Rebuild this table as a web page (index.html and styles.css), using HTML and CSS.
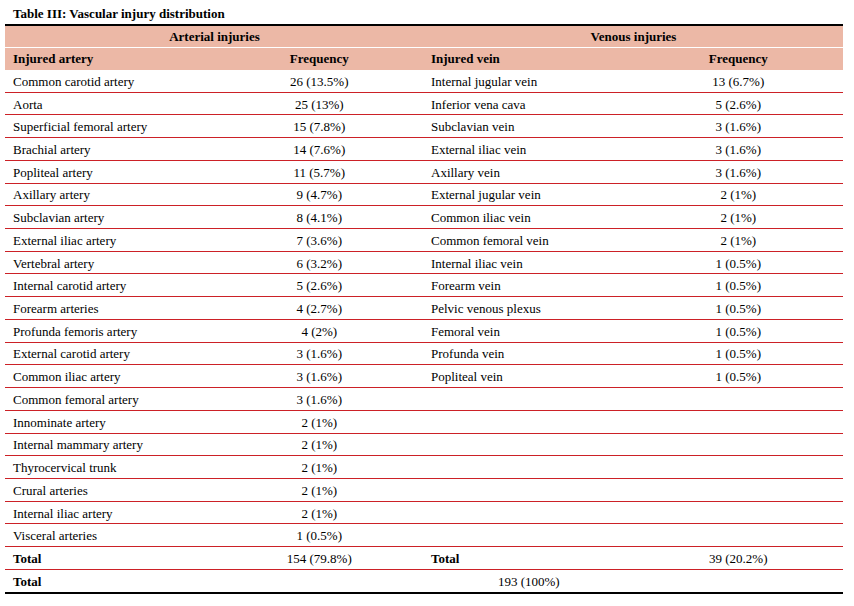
FILE: index.html
```html
<!DOCTYPE html>
<html>
<head>
<meta charset="utf-8">
<link rel="stylesheet" href="styles.css">
</head>
<body>
<div class="page">
  <div class="title">Table III: Vascular injury distribution</div>
  <div class="tbl">
    <div class="c h1 span2 center">Arterial injuries</div>
    <div class="c h1 span2 center">Venous injuries</div>
    <div class="c h2">Injured artery</div>
    <div class="c h2 center">Frequency</div>
    <div class="c h2 vein">Injured vein</div>
    <div class="c h2 center">Frequency</div>

    <div class="c r">Common carotid artery</div><div class="c r center">26 (13.5%)</div><div class="c r vein">Internal jugular vein</div><div class="c r center">13 (6.7%)</div>
    <div class="c r">Aorta</div><div class="c r center">25 (13%)</div><div class="c r vein">Inferior vena cava</div><div class="c r center">5 (2.6%)</div>
    <div class="c r">Superficial femoral artery</div><div class="c r center">15 (7.8%)</div><div class="c r vein">Subclavian vein</div><div class="c r center">3 (1.6%)</div>
    <div class="c r">Brachial artery</div><div class="c r center">14 (7.6%)</div><div class="c r vein">External iliac vein</div><div class="c r center">3 (1.6%)</div>
    <div class="c r">Popliteal artery</div><div class="c r center">11 (5.7%)</div><div class="c r vein">Axillary vein</div><div class="c r center">3 (1.6%)</div>
    <div class="c r">Axillary artery</div><div class="c r center">9 (4.7%)</div><div class="c r vein">External jugular vein</div><div class="c r center">2 (1%)</div>
    <div class="c r">Subclavian artery</div><div class="c r center">8 (4.1%)</div><div class="c r vein">Common iliac vein</div><div class="c r center">2 (1%)</div>
    <div class="c r">External iliac artery</div><div class="c r center">7 (3.6%)</div><div class="c r vein">Common femoral vein</div><div class="c r center">2 (1%)</div>
    <div class="c r">Vertebral artery</div><div class="c r center">6 (3.2%)</div><div class="c r vein">Internal iliac vein</div><div class="c r center">1 (0.5%)</div>
    <div class="c r">Internal carotid artery</div><div class="c r center">5 (2.6%)</div><div class="c r vein">Forearm vein</div><div class="c r center">1 (0.5%)</div>
    <div class="c r">Forearm arteries</div><div class="c r center">4 (2.7%)</div><div class="c r vein">Pelvic venous plexus</div><div class="c r center">1 (0.5%)</div>
    <div class="c r">Profunda femoris artery</div><div class="c r center">4 (2%)</div><div class="c r vein">Femoral vein</div><div class="c r center">1 (0.5%)</div>
    <div class="c r">External carotid artery</div><div class="c r center">3 (1.6%)</div><div class="c r vein">Profunda vein</div><div class="c r center">1 (0.5%)</div>
    <div class="c r">Common iliac artery</div><div class="c r center">3 (1.6%)</div><div class="c r vein">Popliteal vein</div><div class="c r center">1 (0.5%)</div>
    <div class="c r">Common femoral artery</div><div class="c r center">3 (1.6%)</div><div class="c r"></div><div class="c r"></div>
    <div class="c r">Innominate artery</div><div class="c r center">2 (1%)</div><div class="c r"></div><div class="c r"></div>
    <div class="c r">Internal mammary artery</div><div class="c r center">2 (1%)</div><div class="c r"></div><div class="c r"></div>
    <div class="c r">Thyrocervical trunk</div><div class="c r center">2 (1%)</div><div class="c r"></div><div class="c r"></div>
    <div class="c r">Crural arteries</div><div class="c r center">2 (1%)</div><div class="c r"></div><div class="c r"></div>
    <div class="c r">Internal iliac artery</div><div class="c r center">2 (1%)</div><div class="c r"></div><div class="c r"></div>
    <div class="c r">Visceral arteries</div><div class="c r center">1 (0.5%)</div><div class="c r"></div><div class="c r"></div>
    <div class="c r bold">Total</div><div class="c r center">154 (79.8%)</div><div class="c r bold vein">Total</div><div class="c r center">39 (20.2%)</div>
    <div class="c last bold">Total</div><div class="c last span3 center">193 (100%)</div>
  </div>
</div>
</body>
</html>
```

FILE: styles.css
```css
html, body {
  margin: 0;
  padding: 0;
  background: #ffffff;
}
body {
  font-family: "Liberation Serif", "Times New Roman", serif;
  font-size: 13px;
  color: #000000;
}
.page {
  padding-left: 5px;
  width: 838px;
}
.title {
  font-weight: bold;
  height: 24px;
  padding: 4px 0 0 8px;
  line-height: 20px;
  box-sizing: border-box;
}
.tbl {
  display: grid;
  grid-template-columns: repeat(4, 1fr);
  border-top: 2px solid #000;
  border-bottom: 2px solid #000;
}
.c {
  display: flex;
  align-items: center;
  padding: 0 8px;
  box-sizing: border-box;
  white-space: nowrap;
}
.vein {
  padding-left: 7px;
}
.center {
  justify-content: center;
}
.span2 { grid-column: span 2; }
.span3 { grid-column: span 3; }
.bold { font-weight: bold; }
.h1 {
  background: #ecb8a6;
  font-weight: bold;
  height: 22px;
  border-bottom: 1px solid #ffffff;
}
.h2 {
  background: #ecb8a6;
  font-weight: bold;
  height: 22px;
}
.r {
  height: 22.73px;
  padding-top: 2px;
  border-bottom: 1px solid #cc2127;
}
.last {
  height: 21.7px;
  padding-top: 2px;
}
```
